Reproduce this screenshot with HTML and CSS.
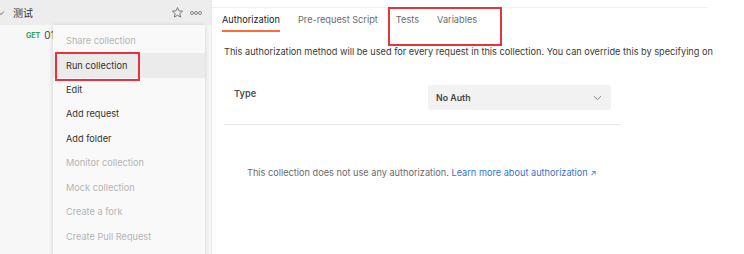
FILE: index.html
```html
<!DOCTYPE html>
<html lang="en">
<head>
    <meta charset="UTF-8">
    <title>Collection - Authorization</title>
    <link rel="stylesheet" href="styles.css">
</head>
<body>
    <div class="app">
        <aside class="sidebar">
            <div class="side-head">
                <svg class="caret" width="6" height="6" viewBox="0 0 6 6"><path d="M-2 1.5 L1 4.5 L4 1.5" fill="none" stroke="#6b6b6b" stroke-width="1"/></svg>
                <span class="coll-name">测试</span>
                <span class="head-icons">
                    <svg width="13" height="13" viewBox="0 0 24 24"><path d="M12 2.8l2.7 6.1 6.6.6-5 4.4 1.5 6.5L12 17l-5.8 3.4 1.5-6.5-5-4.4 6.6-.6z" fill="none" stroke="#6b6b6b" stroke-width="1.6" stroke-linejoin="round"/></svg>
                    <svg width="12" height="6" viewBox="0 0 12 6"><circle cx="2" cy="3" r="1.5" fill="none" stroke="#8a8a8a"/><circle cx="6" cy="3" r="1.5" fill="none" stroke="#8a8a8a"/><circle cx="10" cy="3" r="1.5" fill="none" stroke="#8a8a8a"/></svg>
                </span>
            </div>
            <div class="req-row">
                <span class="method">GET</span>
                <span class="req-name">01</span>
            </div>

            <ul class="menu">
                <li class="menu-item disabled">Share collection</li>
                <li class="menu-item active"><span class="mark">Run collection</span></li>
                <li class="menu-item">Edit</li>
                <li class="menu-item">Add request</li>
                <li class="menu-item">Add folder</li>
                <li class="menu-item disabled">Monitor collection</li>
                <li class="menu-item disabled">Mock collection</li>
                <li class="menu-item disabled">Create a fork</li>
                <li class="menu-item disabled">Create Pull Request</li>
            </ul>
        </aside>

        <main class="content">
            <div class="top-strip"></div>
            <nav class="tabs">
                <span class="tab active">Authorization</span>
                <span class="tab">Pre-request Script</span>
                <span class="tab-mark">
                    <span class="tab">Tests</span>
                    <span class="tab">Variables</span>
                </span>
            </nav>

            <p class="desc">This authorization method will be used for every request in this collection. You can override this by specifying on</p>

            <div class="auth-panel">
                <div class="type-row">
                    <span class="type-label">Type</span>
                    <div class="select">
                        <span>No Auth</span>
                        <svg width="9" height="6" viewBox="0 0 9 6"><path d="M1 1.2 L4.5 4.6 L8 1.2" fill="none" stroke="#8a8a8a" stroke-width="1"/></svg>
                    </div>
                </div>
            </div>

            <p class="no-auth">This collection does not use any authorization. <a href="#">Learn more about authorization <span class="arrow">↗</span></a></p>
        </main>
    </div>
</body>
</html>
```

FILE: styles.css
```css
* {
    margin: 0;
    padding: 0;
    box-sizing: border-box;
}

body {
    background: #fff;
    font-family: 'Inter', 'Noto Sans CJK SC', sans-serif;
    font-size: 9.2px;
    color: #3a3a3a;
    overflow: hidden;
}

.app {
    display: flex;
    height: 254px;
    width: 744px;
}

/* Sidebar */
.sidebar {
    position: relative;
    width: 212px;
    flex-shrink: 0;
    background: #f7f7f7;
    border-right: 1px solid #e9e9e9;
}

.side-head {
    height: 25px;
    background: #ededed;
    display: flex;
    align-items: center;
}

.coll-name {
    margin-left: 7px;
    font-size: 10px;
    color: #333;
}

.head-icons {
    margin-left: auto;
    margin-right: 9px;
    display: flex;
    align-items: center;
    gap: 6px;
}

.req-row {
    height: 20px;
    display: flex;
    align-items: center;
    padding-left: 26px;
    gap: 4px;
}

.method {
    font-size: 7px;
    font-weight: 700;
    color: #2fa55c;
}

.req-name {
    font-size: 10px;
    color: #444;
}

/* Context menu */
.menu {
    position: absolute;
    left: 53px;
    top: 25px;
    width: 152px;
    height: 240px;
    list-style: none;
    background: #f9f9f9;
    box-shadow: 0 1px 5px rgba(0, 0, 0, 0.18);
    padding-top: 3.5px;
}

.menu-item {
    height: 24.5px;
    line-height: 24.5px;
    padding-left: 13px;
    color: #333;
    white-space: nowrap;
}

.menu-item.disabled {
    color: #b5b5b5;
}

.menu-item.active {
    background: #ebebeb;
}

.mark {
    display: inline-block;
    margin-left: -11px;
    margin-top: -1px;
    padding: 0 11px 0 9px;
    height: 29px;
    line-height: 24px;
    border: 2px solid #e5343d;
    vertical-align: top;
}

/* Main content */
.content {
    flex: 1;
    min-width: 0;
    padding-left: 10px;
}

.top-strip {
    height: 8px;
    width: 496px;
    margin-left: -10px;
    border-bottom: 1px solid #f0f0f0;
}

.tabs {
    display: flex;
    align-items: flex-start;
    gap: 18px;
    height: 23px;
    margin-top: 1px;
}

.tab {
    display: inline-block;
    height: 23px;
    line-height: 22px;
    color: #6b6b6b;
    white-space: nowrap;
}

.tab.active {
    color: #212121;
    border-bottom: 2px solid #ff6c37;
}

.tab-mark {
    display: flex;
    gap: 18px;
    margin-left: -8px;
    margin-top: -2px;
    padding: 0 23px 0 6px;
    height: 39px;
    margin-bottom: -16px;
    border: 2px solid #e5343d;
}

.desc {
    margin-top: 13px;
    margin-left: 2px;
    white-space: nowrap;
    line-height: 14px;
}

.auth-panel {
    margin-left: 2px;
    width: 396px;
    padding: 26px 9px 14px 10px;
    border-bottom: 1px solid #e6e6e6;
}

.type-row {
    display: flex;
    align-items: flex-start;
}

.type-label {
    width: 194px;
    font-weight: 600;
    color: #505050;
    line-height: 18px;
}

.select {
    flex: 1;
    height: 25px;
    background: #f2f2f2;
    border-radius: 3px;
    display: flex;
    align-items: center;
    justify-content: space-between;
    padding: 0 9px 0 8px;
    font-weight: 600;
    font-size: 8.8px;
    color: #444;
}

.no-auth {
    margin-top: 42px;
    margin-left: 25px;
    color: #6b6b6b;
    white-space: nowrap;
}

.no-auth a {
    color: #3a72d0;
    text-decoration: none;
}

.arrow {
    font-size: 8px;
}
```
